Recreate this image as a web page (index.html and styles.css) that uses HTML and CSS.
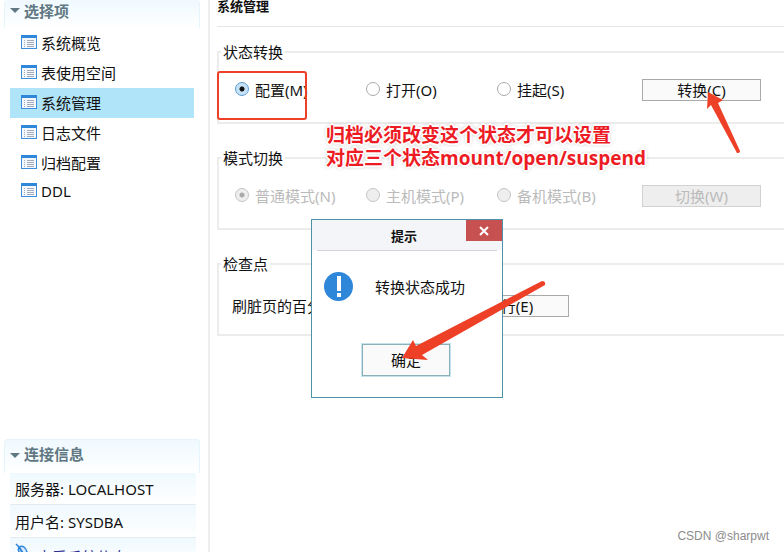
FILE: index.html
```
<!DOCTYPE html>
<html lang="zh-CN">
<head>
  <meta charset="UTF-8" />
  <title>系统管理</title>
  <link rel="stylesheet" href="styles.css">
</head>
<body>
  <svg class="sprite" aria-hidden="true">
    <symbol id="list" viewBox="0 0 16 14">
      <rect x="0.5" y="0.5" width="15" height="13" fill="#f4f8fc" stroke="#3a8edb"/>
      <rect width="16" height="3" fill="#2f87d9"/>
      <path d="M3 5.5h1M3 7.5h1M3 9.5h1M3 11.5h1M6 5.5h7M6 7.5h7M6 9.5h7M6 11.5h7" stroke="#a3abbd"/>
    </symbol>
  </svg>

  <div class="app">
    <aside class="sidebar">
      <section class="options">
        <h2>选择项</h2>
        <nav>
          <a href="#"><svg><use href="#list"/></svg>系统概览</a>
          <a href="#"><svg><use href="#list"/></svg>表使用空间</a>
          <a href="#" class="active"><svg><use href="#list"/></svg>系统管理</a>
          <a href="#"><svg><use href="#list"/></svg>日志文件</a>
          <a href="#"><svg><use href="#list"/></svg>归档配置</a>
          <a href="#" class="short"><svg><use href="#list"/></svg>DDL</a>
        </nav>
      </section>
      <section class="connection">
        <h2>连接信息</h2>
        <p>服务器: LOCALHOST</p>
        <p>用户名: SYSDBA</p>
        <p><a href="#"><svg viewBox="0 0 16 16"><path d="M1 1l3 3M4 4c3-2 7 0 8 5l-3 3c-4-1-7-4-5-8z" fill="#d8ecfb" stroke="#2f87d9" stroke-width="1.5"/><path d="M4 4l5 8M11 10l4 4" stroke="#2f87d9" stroke-width="2"/></svg><span>查看系统信息</span></a></p>
      </section>
    </aside>

    <main>
      <h1>系统管理</h1>
      <form>
        <fieldset>
          <legend>状态转换</legend>
          <div class="row">
            <label><input type="radio" name="state" checked>配置(M)</label>
            <label><input type="radio" name="state">打开(O)</label>
            <label><input type="radio" name="state">挂起(S)</label>
            <button type="button">转换(C)</button>
          </div>
        </fieldset>
        <fieldset disabled>
          <legend>模式切换</legend>
          <div class="row">
            <label><input type="radio" name="mode" checked>普通模式(N)</label>
            <label><input type="radio" name="mode">主机模式(P)</label>
            <label><input type="radio" name="mode">备机模式(B)</label>
            <button type="button">切换(W)</button>
          </div>
        </fieldset>
        <fieldset>
          <legend>检查点</legend>
          <div class="row checkpoint">
            <span>刷脏页的百分</span>
            <button type="button">执行(E)</button>
          </div>
        </fieldset>
      </form>
    </main>
  </div>

  <div class="dialog" role="dialog" aria-labelledby="dialogTitle">
    <header>
      <h3 id="dialogTitle">提示</h3>
      <button type="button" class="close" aria-label="关闭"><svg viewBox="0 0 10 10"><path d="M1 1l8 8M9 1L1 9" stroke="#fff" stroke-width="2"/></svg></button>
    </header>
    <div class="message">
      <svg viewBox="0 0 29 29"><circle cx="14.5" cy="14.5" r="14.5" fill="#2f87d9"/><path d="M13 4h4v15h-4zM13 21h4v4h-4z" fill="#fff"/></svg>
      <span>转换状态成功</span>
    </div>
    <button type="button" class="ok">确定</button>
  </div>

  <!-- annotations -->
  <div class="mark-box"></div>
  <p class="note">归档必须改变这个状态才可以设置<br>对应三个状态mount/open/suspend</p>
  <svg class="arrow arrow-convert" viewBox="0 0 35 63"><path d="M2 0L17 8L12 11L34 59Q34 61 31 61L5 13L1 17Z" fill="#ee4027"/></svg>
  <svg class="arrow arrow-ok" viewBox="0 0 144 81"><path d="M0 77L11 59L14 65L140 0Q144 0 143 4L20 74L26 79Z" fill="#ee4027"/></svg>
  <span class="watermark">CSDN @sharpwt</span>
</body>
</html>
```
FILE: styles.css
```
* {
  box-sizing: border-box;
}
body {
  margin: 0;
  height: 100vh;
  overflow: hidden;
  position: relative;
  background-color: #fff;
  color: #111;
  font-family: "Noto Sans", "Noto Sans CJK SC", sans-serif;
  font-size: 15px;
  line-height: 24px;
}
h1, h2, h3, p {
  margin: 0;
}
a {
  color: inherit;
  text-decoration: none;
}
button {
  font: inherit;
  color: inherit;
  padding: 0;
}
.sprite {
  position: absolute;
  width: 0;
  height: 0;
}
.app {
  display: flex;
  height: 100vh;
}

/* sidebar */
.sidebar {
  flex: 0 0 210px;
  padding: 0 8px 0 4px;
  border-right: 2px solid #ededed;
  overflow: hidden;
}
.sidebar h2 {
  height: 34px;
  padding: 2px 0 0 19px;
  position: relative;
  border: 1px solid #e6f5fb;
  border-bottom: none;
  border-radius: 4px 4px 0 0;
  background: linear-gradient(#eff9fe, #fff);
  color: #607883;
  font-size: 15px;
  font-weight: 600;
}
.sidebar h2::before {
  content: "";
  position: absolute;
  left: 5px;
  top: 13px;
  border: 5px solid transparent;
  border-top-color: #607883;
  border-bottom: none;
}
.options {
  height: 439px;
}
.options h2 {
  height: 28px;
  padding-top: 0;
  border-top: none;
  line-height: 22px;
}
.options h2::before {
  top: 8px;
}
.options nav {
  padding: 0 6px;
}
.options a {
  display: flex;
  align-items: center;
  gap: 4px;
  height: 30px;
  padding-left: 11px;
}
.options a.active {
  background-color: #b0e4f8;
}
.options a.short {
  height: 25px;
}
.options a svg {
  width: 16px;
  height: 14px;
  margin-bottom: 2px;
}
.connection p {
  height: 32px;
  margin: 0 4px 0 6px;
  padding: 4px 0 0 5px;
  border-bottom: 1px solid #e4ebee;
  background: linear-gradient(#eff9fe, #fff);
}
.connection p + p {
  height: 33px;
  padding-top: 5px;
}
.connection p a {
  display: flex;
  gap: 6px;
  color: #2b2b90;
}
.connection a span {
  padding-top: 2px;
}
.connection svg {
  width: 16px;
  height: 16px;
}

/* content */
main {
  flex: 1;
  min-width: 0;
  padding-left: 7px;
}
main h1 {
  height: 27px;
  border-bottom: 1px solid #e6e6e6;
  font-size: 13px;
  line-height: 13px;
}
form {
  padding-top: 13px;
}
fieldset {
  height: 84px;
  min-width: 0;
  margin: 0 0 22px;
  padding: 0;
  border: 2px solid #ececec;
  border-right: none;
}
legend {
  margin-left: 2px;
  padding: 0 2px;
}
.row {
  display: grid;
  grid-template-columns: 131px 131px 145px 119px;
  align-items: center;
  padding: 14px 0 0 16px;
}
.row label {
  display: flex;
  align-items: center;
  gap: 6px;
  white-space: nowrap;
}
input[type="radio"] {
  appearance: none;
  width: 14px;
  height: 14px;
  margin: 0 0 2px;
  border: 1px solid #aaa;
  border-radius: 50%;
  background-color: #fff;
}
input[type="radio"]:checked {
  border-color: #5a9bd5;
  background: radial-gradient(circle, #111 0 2px, #c5e2f7 3px);
}
.row button {
  height: 22px;
  border: 1px solid #aaa;
  background-color: #fafafa;
  line-height: 20px;
}
fieldset:disabled label {
  color: #bbb;
}
fieldset:disabled input[type="radio"] {
  border-color: #c4c4c4;
  background-color: #eee;
}
fieldset:disabled input[type="radio"]:checked {
  background: radial-gradient(circle, #aaa 0 2px, #eee 3px);
}
fieldset:disabled button {
  border-color: #d2d2d2;
  background-color: #eee;
  color: #bbb;
}
.row.checkpoint {
  grid-template-columns: 218px 119px;
  padding: 18px 0 0 13px;
}

/* dialog */
.dialog {
  position: absolute;
  left: 311px;
  top: 219px;
  width: 192px;
  padding-bottom: 21px;
  border: 1px solid #4d92a8;
  background: linear-gradient(#f3f5f8 30px, #fff 30px);
}
.dialog header {
  height: 31px;
  position: relative;
  margin: 0 5px;
  border-bottom: 1px solid #d2d4d6;
}
.dialog h3 {
  font-size: 13px;
  line-height: 32px;
  text-align: center;
  padding-right: 6px;
}
.close {
  position: absolute;
  right: -5px;
  top: 0;
  width: 36px;
  height: 21px;
  border: none;
  background-color: #c75050;
  line-height: 0;
}
.close svg {
  width: 10px;
  height: 10px;
}
.message {
  display: flex;
  align-items: center;
  gap: 22px;
  padding: 21px 0 0 12px;
}
.message svg {
  width: 29px;
  height: 29px;
}
.ok {
  display: block;
  width: 88px;
  height: 32px;
  margin: 43px 0 0 50px;
  border: 1px solid #8ab0ba;
  outline: 1px solid #c2e2ec;
  background-color: #fafafa;
}

/* annotations */
.mark-box {
  position: absolute;
  left: 217px;
  top: 71px;
  width: 90px;
  height: 49px;
  border: 2px solid #ee4027;
  border-radius: 3px;
}
.note {
  position: absolute;
  left: 326px;
  top: 124px;
  color: #ed1c24;
  font-family: "Open Sans", "Noto Sans CJK SC", sans-serif;
  font-size: 19px;
  font-weight: bold;
  line-height: 23px;
  white-space: nowrap;
  text-shadow: 1px 1px 0 #fff, -1px -1px 0 #fff, 1px -1px 0 #fff, -1px 1px 0 #fff, 2px 0 0 #fff, -2px 0 0 #fff, 0 2px 0 #fff, 0 -2px 0 #fff, 0 0 4px #777;
}
.arrow {
  position: absolute;
}
.arrow-convert {
  left: 706px;
  top: 92px;
  width: 35px;
  height: 63px;
}
.arrow-ok {
  left: 402px;
  top: 281px;
  width: 144px;
  height: 81px;
}
.watermark {
  position: absolute;
  right: 15px;
  bottom: 4px;
  color: #8c8c8c;
  font-family: "Liberation Sans", sans-serif;
  font-size: 12px;
}
```
